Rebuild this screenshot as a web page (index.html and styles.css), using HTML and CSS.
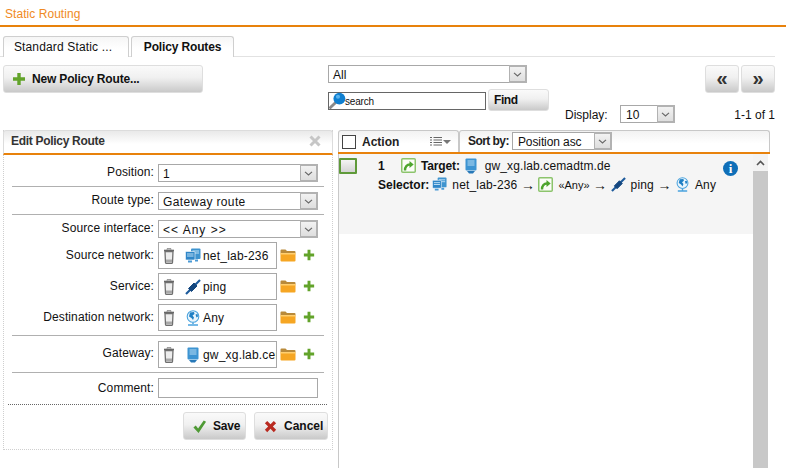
FILE: index.html
```html
<!DOCTYPE html>
<html lang="en">
<head>
<meta charset="utf-8">
<title>Static Routing</title>
<link rel="stylesheet" href="styles.css">
</head>
<body>
<svg class="defs" width="0" height="0">
  <defs>
    <symbol id="plus" viewBox="0 0 14 14"><path d="M7 1v12M1 7h12" fill="none" stroke="#62a32a" stroke-width="3.4"/></symbol>
    <symbol id="trash" viewBox="0 0 12 16"><path d="M1 2.500h10" fill="none" stroke="#666" stroke-width="1.600"/><path d="M4 1.500V.8h4v.7" fill="none" stroke="#777"/><path d="M2 3.500h8l-.5 11a1 1 0 0 1-1 .9H3.500a1 1 0 0 1-1-.9z" fill="#ededed" stroke="#6f6f6f" stroke-width="1.300"/><path d="M3 11.500h6v3H3z" fill="#a8a8a8"/></symbol>
    <symbol id="net" viewBox="0 0 16 16"><rect x="6" y="0.500" width="9.500" height="10.500" rx="1" fill="#3f94cf"/><path d="M7.500 3h6.500M7.500 5h6.500" stroke="#bfe0f5"/><rect x="0.500" y="3.500" width="9.500" height="8.500" rx="1" fill="#2f86c8" stroke="#fff" stroke-width=".6"/><path d="M2 6h6.500M2 8h6.500" stroke="#bfe0f5"/><path d="M3 12.500h4v2H3zM10 11.500h3v2h-3z" fill="#4a9ad6"/></symbol>
    <symbol id="ping" viewBox="0 0 16 16"><path d="M1 15L15 1" stroke="#1d5a9b" stroke-width="2.200" fill="none"/><path d="M3.500 9.500L9 4l3 3-5.500 5.500z" fill="#14477f" stroke="#14477f" stroke-linejoin="round"/></symbol>
    <symbol id="globe" viewBox="0 0 16 16"><circle cx="8" cy="6.500" r="5.800" fill="#eaf5fc" stroke="#4aa3de" stroke-width="1.100"/><path d="M5 2.500l4-.5.500 2L7.500 5.500l1.500 2-1 2.500L6.500 8 4 6.500z" fill="#1f7fc4"/><path d="M10.500 4.500l2-.5.500 2.500-1.500 1z" fill="#1f7fc4"/><path d="M8 12.500v1.500M3 15h10" stroke="#4aa3de" stroke-width="1.500"/></symbol>
    <symbol id="gw" viewBox="0 0 12 16"><rect x="0.500" y="0.500" width="11" height="12" rx="1" fill="#3d94d2"/><path d="M2.500 3h7M2.500 5h7M2.500 7h7" stroke="#b9dcf3"/><path d="M2 13h8l-2 2.500H4z" fill="#2778b8"/></symbol>
    <symbol id="folder" viewBox="0 0 16 14"><path d="M.5 2.500A1 1 0 0 1 1.500 1.500h4l1.500 1.500h7.500a1 1 0 0 1 1 1V5H.5z" fill="#b98a3a"/><path d="M.5 5h15v7.500a1 1 0 0 1-1 1h-13a1 1 0 0 1-1-1z" fill="#f6a623"/><path d="M.5 5h15v1.500H.5z" fill="#ffcf70"/></symbol>
    <symbol id="route" viewBox="0 0 15 15"><rect x=".75" y=".75" width="13.500" height="13.500" rx="1" fill="#fbfdf8" stroke="#8cc46c" stroke-width="1.500"/><path d="M4 12.500c0-4 2-6 5-6" fill="none" stroke="#4ea52e" stroke-width="2.400"/><path d="M8.500 3l4.200 3.500-4.200 3.500z" fill="#4ea52e"/></symbol>
    <symbol id="chev" viewBox="0 0 9 5"><path d="M1 .8l3.500 3.200L8 .8" fill="none" stroke="#666" stroke-width="1.100"/></symbol>
    <symbol id="mag" viewBox="0 0 18 18"><path d="M1.500 16.500L7 11" stroke="#8a8a8a" stroke-width="3" stroke-linecap="round"/><circle cx="11" cy="7" r="6.300" fill="#0f7fd0"/><circle cx="9.500" cy="5" r="2.200" fill="#59b3ee"/></symbol>
  </defs>
</svg>

<header class="page-title">Static Routing</header>

<nav class="tabs">
  <div class="tab tab-first">Standard Static ...</div>
  <div class="tab tab-active">Policy Routes</div>
</nav>

<section class="toolbar">
  <button class="btn btn-new" type="button"><svg class="ico-plus-lg"><use href="#plus"/></svg>New Policy Route...</button>
  <div class="filters">
    <div class="select select-all"><span class="select-text">All</span><span class="arrow"><svg class="chev"><use href="#chev"/></svg></span></div>
    <div class="find-row">
      <div class="search"><svg class="ico-mag"><use href="#mag"/></svg>search</div>
      <button class="btn btn-find" type="button">Find</button>
    </div>
  </div>
  <div class="paging">
    <div class="pager">
      <button class="btn btn-page" type="button">«</button>
      <button class="btn btn-page" type="button">»</button>
    </div>
    <div class="display-row">
      <span class="display-label">Display:</span>
      <div class="select select-display"><span class="select-text">10</span><span class="arrow"><svg class="chev"><use href="#chev"/></svg></span></div>
      <span class="count">1-1 of 1</span>
    </div>
  </div>
</section>

<main class="content">
  <section class="edit-panel">
    <div class="edit-head"><span class="edit-title">Edit Policy Route</span><svg class="close" viewBox="0 0 12 12"><path d="M1.500 1.500l9 9M10.500 1.500l-9 9" stroke="#c6c6c6" stroke-width="3"/></svg></div>
    <div class="form">
      <div class="row row-sel row-first"><label class="lbl">Position:</label><div class="select select-form"><span class="select-text">1</span><span class="arrow"><svg class="chev"><use href="#chev"/></svg></span></div></div>
      <hr class="sep">
      <div class="row row-sel"><label class="lbl">Route type:</label><div class="select select-form"><span class="select-text">Gateway route</span><span class="arrow"><svg class="chev"><use href="#chev"/></svg></span></div></div>
      <hr class="sep">
      <div class="row row-sel"><label class="lbl">Source interface:</label><div class="select select-form"><span class="select-text select-any">&lt;&lt; Any &gt;&gt;</span><span class="arrow"><svg class="chev"><use href="#chev"/></svg></span></div></div>
      <div class="row row-obj row-src"><label class="lbl">Source network:</label><div class="objbox"><svg class="ico-trash"><use href="#trash"/></svg><svg class="ico-obj"><use href="#net"/></svg><span class="objname">net_lab-236</span></div><svg class="ico-folder"><use href="#folder"/></svg><svg class="ico-plus"><use href="#plus"/></svg></div>
      <div class="row row-obj"><label class="lbl">Service:</label><div class="objbox"><svg class="ico-trash"><use href="#trash"/></svg><svg class="ico-obj"><use href="#ping"/></svg><span class="objname">ping</span></div><svg class="ico-folder"><use href="#folder"/></svg><svg class="ico-plus"><use href="#plus"/></svg></div>
      <div class="row row-obj"><label class="lbl">Destination network:</label><div class="objbox"><svg class="ico-trash"><use href="#trash"/></svg><svg class="ico-obj"><use href="#globe"/></svg><span class="objname">Any</span></div><svg class="ico-folder"><use href="#folder"/></svg><svg class="ico-plus"><use href="#plus"/></svg></div>
      <hr class="sep">
      <div class="row row-obj row-gw"><label class="lbl">Gateway:</label><div class="objbox"><svg class="ico-trash"><use href="#trash"/></svg><svg class="ico-obj"><use href="#gw"/></svg><span class="objname">gw_xg.lab.cemadtm.de</span></div><svg class="ico-folder"><use href="#folder"/></svg><svg class="ico-plus"><use href="#plus"/></svg></div>
      <hr class="sep">
      <div class="row row-comment"><label class="lbl">Comment:</label><div class="comment"></div></div>
      <div class="dotted"></div>
      <div class="actions">
        <button class="btn btn-save" type="button"><svg class="ico-act" viewBox="0 0 16 16"><path d="M1.500 9l2.500-2 2.500 3L12.500 1.500l2.500 1.500-8 12z" fill="#4f9a35"/></svg>Save</button>
        <button class="btn btn-cancel" type="button"><svg class="ico-act" viewBox="0 0 16 16"><path d="M2 4.500L4.500 2 8 5.500 11.500 2 14 4.500 10.500 8 14 11.500 11.500 14 8 10.500 4.500 14 2 11.500 5.500 8z" fill="#b92a20"/></svg>Cancel</button>
      </div>
    </div>
  </section>

  <section class="list-panel">
    <div class="list-head">
      <div class="head-action">
        <span class="checkbox"></span>
        <span class="action-label">Action</span>
        <svg class="ico-list" viewBox="0 0 12 11"><path d="M0 1.500h2M3.500 1.500H12M0 4h2M3.500 4H12M0 6.500h2M3.500 6.500H12M0 9h2M3.500 9H12" stroke="#666" stroke-width="1"/></svg>
        <span class="caret"></span>
      </div>
      <div class="head-sort">
        <span class="sort-label">Sort by:</span>
        <div class="select select-sort"><span class="select-text">Position asc</span><span class="arrow"><svg class="chev"><use href="#chev"/></svg></span></div>
      </div>
    </div>
    <div class="list-body">
      <div class="rule-row">
        <span class="row-check"></span>
        <div class="rule">
          <div class="rule-line rule-target">
            <b class="rule-num">1</b>
            <svg class="ico-route"><use href="#route"/></svg>
            <b class="target-label">Target:</b>
            <svg class="ico-gw"><use href="#gw"/></svg>
            <span class="target-name">gw_xg.lab.cemadtm.de</span>
          </div>
          <div class="rule-line">
            <b class="selector-label">Selector:</b>
            <svg class="ico-sel"><use href="#net"/></svg>
            <span class="sel-text">net_lab-236</span>
            <span class="sel-arrow">→</span>
            <svg class="ico-sel"><use href="#route"/></svg>
            <span class="sel-any">«Any»</span>
            <span class="sel-arrow">→</span>
            <svg class="ico-sel"><use href="#ping"/></svg>
            <span class="sel-text">ping</span>
            <span class="sel-arrow">→</span>
            <svg class="ico-sel"><use href="#globe"/></svg>
            <span class="sel-text">Any</span>
          </div>
        </div>
        <span class="info">i</span>
      </div>
      <div class="scrollbar">
        <div class="scroll-up"><svg class="scroll-chev" viewBox="0 0 9 6"><path d="M1 5l3.500-3.500L8 5" fill="none" stroke="#555" stroke-width="1.600"/></svg></div>
        <div class="scroll-thumb"></div>
      </div>
    </div>
  </section>
</main>
</body>
</html>
```
FILE: styles.css
```css
* { box-sizing: border-box; }
html, body { margin: 0; padding: 0; }
body {
  width: 786px;
  height: 468px;
  overflow: hidden;
  background: #fff;
  color: #111;
  font: 12px/14px "Liberation Sans", Arial, sans-serif;
}
.defs { display: block; height: 0; }
b { font-weight: bold; }

.page-title {
  height: 27px;
  padding: 7px 0 0 5px;
  color: #f08a24;
  letter-spacing: .05px;
  border-bottom: 2px solid #e8820c;
}

.tabs {
  display: flex;
  gap: 2px;
  margin: 9px 11px 0 0;
  padding-left: 3px;
  height: 21px;
  border-bottom: 1px solid #e2e2e2;
}
.tab {
  height: 21px;
  padding-top: 3px;
  background: linear-gradient(#f6f6f6, #fff 60%);
  border: 1px solid #cfcfcf;
  border-bottom: 0;
  border-radius: 3px 3px 0 0;
  text-align: center;
}
.tab-first { width: 126px; padding-right: 6px; letter-spacing: .15px; }
.tab-active { width: 103px; font-weight: bold; letter-spacing: -.15px; }

.btn {
  display: flex;
  align-items: center;
  margin: 0;
  padding: 0;
  border: 1px solid #dedede;
  border-radius: 3px;
  background: linear-gradient(#fafafa, #f0f0f0 45%, #c9c9c9);
  color: #111;
  font: bold 12px/14px "Liberation Sans", Arial, sans-serif;
}

.toolbar {
  display: flex;
  padding: 8px 11px 0 3px;
  height: 73px;
}
.btn-new { width: 200px; height: 28px; padding-left: 8px; letter-spacing: -.17px; }
.ico-plus-lg { width: 14px; height: 14px; margin-right: 6px; }

.filters { width: 221px; margin-left: 125px; }

.select {
  display: flex;
  align-items: center;
  justify-content: space-between;
  background: #fff;
  border: 1px solid #a8a8a8;
}
.select-text { padding-left: 4px; padding-top: 1px; white-space: nowrap; }
.arrow {
  display: flex;
  align-items: center;
  justify-content: center;
  flex: none;
  align-self: stretch;
  width: 18px;
  margin: -1px;
  background: linear-gradient(#f2f2f2, #dedede);
  border: 2px solid #b2b2b2;
  border-left-width: 1px;
}
.chev { width: 9px; height: 5px; }

.select-all { width: 199px; height: 18px; }
.find-row { display: flex; align-items: flex-end; gap: 2px; margin-top: 6px; }
.search {
  display: flex;
  align-items: center;
  width: 158px;
  height: 18px;
  border: 1px solid #666;
  font-size: 10px;
  letter-spacing: -.2px;
  margin-bottom: 1px;
  padding-top: 1px;
}
.ico-mag { width: 17px; height: 17px; margin: -2px -1px 0 0; }
.btn-find { width: 61px; height: 22px; padding-left: 5px; letter-spacing: -.4px; }

.paging { flex: 1; padding-left: 16px; }
.pager { display: flex; justify-content: flex-end; gap: 2px; }
.btn-page {
  width: 34px;
  height: 28px;
  justify-content: center;
  font-size: 20px;
  color: #333;
  padding-bottom: 3px;
}
.display-row { display: flex; align-items: center; margin-top: 12px; height: 18px; }
.display-label { width: 55px; padding-top: 2px; }
.select-display { width: 55px; height: 18px; }
.select-display .select-text { padding-left: 5px; padding-top: 2px; }
.count { margin-left: auto; padding-top: 2px; }

.content {
  display: flex;
  gap: 5px;
  padding-left: 3px;
}

.edit-panel {
  width: 330px;
  height: 320px;
  border: 1px dotted #cfcfcf;
  border-top: 0;
}
.edit-head {
  display: flex;
  justify-content: space-between;
  align-items: center;
  height: 25px;
  margin: 0 -1px;
  padding: 0 11px 2px 7px;
  font-weight: bold;
  color: #333;
  background: linear-gradient(#e9e9e9, #fff 60%);
  border: 1px solid #dcdcdc;
  border-bottom: 2px solid #e8820c;
  border-radius: 3px 3px 0 0;
}
.edit-title { letter-spacing: -.3px; }
.close { width: 12px; height: 12px; flex: none; }

.form { padding: 9px 0 0 0; }
.row { display: flex; align-items: center; }
.lbl {
  width: 150px;
  flex: none;
  margin-right: 4px;
  text-align: right;
  letter-spacing: .1px;
}
.row-sel .lbl { padding-bottom: 2px; }
.row-sel { height: 18px; }
.select-form { width: 160px; height: 18px; }
.select-form .select-text { letter-spacing: .35px; padding-left: 4px; padding-top: 1px; }
.select-form .select-any { letter-spacing: 1px; }

.sep {
  margin: 4px 8px 5px 8px;
  height: 1px;
  border: 0;
  background: #b0b0b0;
}

.row-obj { height: 27px; margin-top: 4px; }
.row-src { margin-top: 4px; }
.row-gw { margin-top: 0; }
.objbox {
  display: flex;
  align-items: center;
  flex: none;
  width: 119px;
  height: 27px;
  padding-left: 4px;
  border: 1px solid #a8a8a8;
  overflow: hidden;
  white-space: nowrap;
}
.ico-trash { width: 12px; height: 16px; flex: none; margin-right: 10px; }
.ico-obj { width: 16px; height: 16px; flex: none; margin-right: 2px; }
.objname { letter-spacing: .2px; }
.ico-folder { width: 16px; height: 14px; margin: 0 0 2px 3px; flex: none; }
.ico-plus { width: 12px; height: 12px; margin: 0 0 2px 7px; flex: none; }
.row-obj .lbl { padding-bottom: 1px; }
.row-gw .lbl { padding-bottom: 3px; }

.row-comment { height: 20px; }
.comment { width: 160px; height: 20px; border: 1px solid #a8a8a8; }
.row-comment .lbl { padding-bottom: 1px; }

.dotted { margin: 6px 5px 0 4px; border-top: 1px dotted #666; }

.actions {
  display: flex;
  justify-content: flex-end;
  gap: 8px;
  margin: 7px 4px 0 0;
}
.btn-save { width: 63px; height: 28px; padding-left: 8px; letter-spacing: -.2px; }
.btn-cancel { width: 74px; height: 28px; padding-left: 8px; }
.ico-act { width: 15px; height: 15px; margin-right: 6px; flex: none; }

.list-panel { width: 432px; }
.list-head {
  display: flex;
  height: 24px;
  border-bottom: 2px solid #e8820c;
}
.head-action, .head-sort {
  display: flex;
  align-items: center;
  background: linear-gradient(#f2f2f2, #fff 60%);
  border: 1px solid #c8c8c8;
  border-bottom: 0;
  border-radius: 3px 3px 0 0;
}
.head-action { width: 121px; padding-left: 3px; }
.head-sort { flex: 1; padding-left: 8px; align-items: flex-start; padding-top: 1px; }
.checkbox { width: 14px; height: 14px; border: 1px solid #444; background: #fff; flex: none; }
.action-label { font-weight: bold; margin-left: 6px; color: #222; }
.ico-list { width: 12px; height: 11px; margin-left: 31px; flex: none; }
.caret {
  margin-left: 1px;
  border-top: 4px solid #777;
  border-left: 4px solid transparent;
  border-right: 4px solid transparent;
}
.sort-label { font-weight: bold; margin-top: 2px; color: #222; letter-spacing: -.55px; }
.select-sort { width: 100px; height: 18px; margin-left: 3px; }
.select-sort .select-text { letter-spacing: -.1px; padding-left: 5px; }

.list-body {
  display: flex;
  height: 314px;
  border-left: 1px solid #c8c8c8;
}
.rule-row {
  display: flex;
  width: 414px;
  height: 80px;
  background: #f5f5f5;
}
.row-check {
  flex: none;
  width: 18px;
  height: 16px;
  margin-top: 4px;
  border: 2px solid #5f9a3a;
  border-radius: 1px;
  background: linear-gradient(#f4f4f4, #d4d4d4);
}
.rule { width: 345px; margin-left: 21px; padding-top: 2px; }
.rule-line { display: flex; align-items: center; height: 19px; white-space: nowrap; }
.rule-num { width: 23px; }
.ico-route { width: 15px; height: 15px; margin-right: 5px; flex: none; }
.target-label { margin-right: 4px; letter-spacing: -.15px; }
.ico-gw { width: 12px; height: 16px; margin: 0 8px 0 1px; flex: none; }
.target-name { letter-spacing: .12px; }
.selector-label { margin-right: 3px; }
.ico-sel { width: 15px; height: 15px; flex: none; margin: 0 5px 0 0; }
.sel-text { letter-spacing: .15px; }
.sel-arrow { margin: 0 3.500px; font-size: 14px; }
.sel-any { font-size: 11px; }
.info {
  flex: none;
  width: 15px;
  height: 15px;
  margin: 7px 0 0 0;
  border-radius: 50%;
  background: #0f6fb8;
  color: #fff;
  text-align: center;
  font: bold 13px/15px "Liberation Serif", serif;
}
.scrollbar { width: 15px; display: flex; flex-direction: column; }
.scroll-up { height: 17px; display: flex; align-items: center; justify-content: center; background: #f3f3f3; }
.scroll-chev { width: 9px; height: 6px; }
.scroll-thumb { flex: 1; background: #c8c8c8; }
```
